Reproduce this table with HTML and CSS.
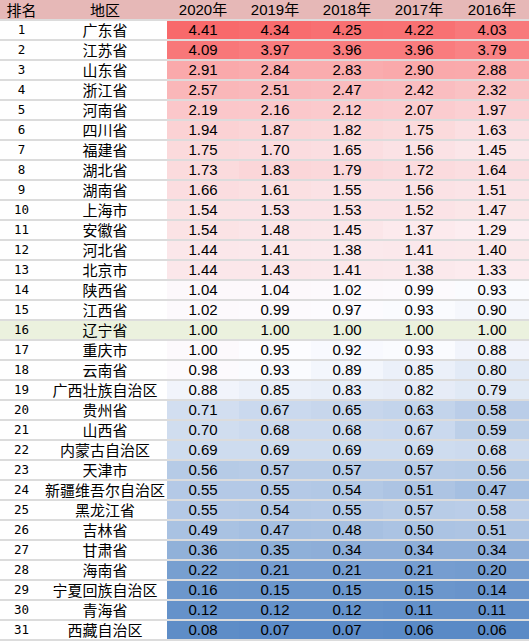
FILE: index.html
```html
<!DOCTYPE html>
<html lang="zh-CN">
<head>
<meta charset="utf-8">
<title>排名</title>
<link rel="stylesheet" href="styles.css">
</head>
<body>
<table class="rank-table">
  <colgroup>
    <col class="c-rank"><col class="c-region"><col class="c-year"><col class="c-year"><col class="c-year"><col class="c-year"><col class="c-last">
  </colgroup>
  <thead>
    <tr><th class="rank">排名</th><th class="region">地区</th><th>2020年</th><th>2019年</th><th>2018年</th><th>2017年</th><th>2016年</th></tr>
  </thead>
  <tbody>
    <tr><td class="rank">1</td><td class="region">广东省</td><td class="val">4.41</td><td class="val">4.34</td><td class="val">4.25</td><td class="val">4.22</td><td class="val">4.03</td></tr>
    <tr><td class="rank">2</td><td class="region">江苏省</td><td class="val">4.09</td><td class="val">3.97</td><td class="val">3.96</td><td class="val">3.96</td><td class="val">3.79</td></tr>
    <tr><td class="rank">3</td><td class="region">山东省</td><td class="val">2.91</td><td class="val">2.84</td><td class="val">2.83</td><td class="val">2.90</td><td class="val">2.88</td></tr>
    <tr><td class="rank">4</td><td class="region">浙江省</td><td class="val">2.57</td><td class="val">2.51</td><td class="val">2.47</td><td class="val">2.42</td><td class="val">2.32</td></tr>
    <tr><td class="rank">5</td><td class="region">河南省</td><td class="val">2.19</td><td class="val">2.16</td><td class="val">2.12</td><td class="val">2.07</td><td class="val">1.97</td></tr>
    <tr><td class="rank">6</td><td class="region">四川省</td><td class="val">1.94</td><td class="val">1.87</td><td class="val">1.82</td><td class="val">1.75</td><td class="val">1.63</td></tr>
    <tr><td class="rank">7</td><td class="region">福建省</td><td class="val">1.75</td><td class="val">1.70</td><td class="val">1.65</td><td class="val">1.56</td><td class="val">1.45</td></tr>
    <tr><td class="rank">8</td><td class="region">湖北省</td><td class="val">1.73</td><td class="val">1.83</td><td class="val">1.79</td><td class="val">1.72</td><td class="val">1.64</td></tr>
    <tr><td class="rank">9</td><td class="region">湖南省</td><td class="val">1.66</td><td class="val">1.61</td><td class="val">1.55</td><td class="val">1.56</td><td class="val">1.51</td></tr>
    <tr><td class="rank">10</td><td class="region">上海市</td><td class="val">1.54</td><td class="val">1.53</td><td class="val">1.53</td><td class="val">1.52</td><td class="val">1.47</td></tr>
    <tr><td class="rank">11</td><td class="region">安徽省</td><td class="val">1.54</td><td class="val">1.48</td><td class="val">1.45</td><td class="val">1.37</td><td class="val">1.29</td></tr>
    <tr><td class="rank">12</td><td class="region">河北省</td><td class="val">1.44</td><td class="val">1.41</td><td class="val">1.38</td><td class="val">1.41</td><td class="val">1.40</td></tr>
    <tr><td class="rank">13</td><td class="region">北京市</td><td class="val">1.44</td><td class="val">1.43</td><td class="val">1.41</td><td class="val">1.38</td><td class="val">1.33</td></tr>
    <tr><td class="rank">14</td><td class="region">陕西省</td><td class="val">1.04</td><td class="val">1.04</td><td class="val">1.02</td><td class="val">0.99</td><td class="val">0.93</td></tr>
    <tr><td class="rank">15</td><td class="region">江西省</td><td class="val">1.02</td><td class="val">0.99</td><td class="val">0.97</td><td class="val">0.93</td><td class="val">0.90</td></tr>
    <tr class="hl"><td class="rank">16</td><td class="region">辽宁省</td><td class="val">1.00</td><td class="val">1.00</td><td class="val">1.00</td><td class="val">1.00</td><td class="val">1.00</td></tr>
    <tr><td class="rank">17</td><td class="region">重庆市</td><td class="val">1.00</td><td class="val">0.95</td><td class="val">0.92</td><td class="val">0.93</td><td class="val">0.88</td></tr>
    <tr><td class="rank">18</td><td class="region">云南省</td><td class="val">0.98</td><td class="val">0.93</td><td class="val">0.89</td><td class="val">0.85</td><td class="val">0.80</td></tr>
    <tr><td class="rank">19</td><td class="region">广西壮族自治区</td><td class="val">0.88</td><td class="val">0.85</td><td class="val">0.83</td><td class="val">0.82</td><td class="val">0.79</td></tr>
    <tr><td class="rank">20</td><td class="region">贵州省</td><td class="val">0.71</td><td class="val">0.67</td><td class="val">0.65</td><td class="val">0.63</td><td class="val">0.58</td></tr>
    <tr><td class="rank">21</td><td class="region">山西省</td><td class="val">0.70</td><td class="val">0.68</td><td class="val">0.68</td><td class="val">0.67</td><td class="val">0.59</td></tr>
    <tr><td class="rank">22</td><td class="region">内蒙古自治区</td><td class="val">0.69</td><td class="val">0.69</td><td class="val">0.69</td><td class="val">0.69</td><td class="val">0.68</td></tr>
    <tr><td class="rank">23</td><td class="region">天津市</td><td class="val">0.56</td><td class="val">0.57</td><td class="val">0.57</td><td class="val">0.57</td><td class="val">0.56</td></tr>
    <tr><td class="rank">24</td><td class="region">新疆维吾尔自治区</td><td class="val">0.55</td><td class="val">0.55</td><td class="val">0.54</td><td class="val">0.51</td><td class="val">0.47</td></tr>
    <tr><td class="rank">25</td><td class="region">黑龙江省</td><td class="val">0.55</td><td class="val">0.54</td><td class="val">0.55</td><td class="val">0.57</td><td class="val">0.58</td></tr>
    <tr><td class="rank">26</td><td class="region">吉林省</td><td class="val">0.49</td><td class="val">0.47</td><td class="val">0.48</td><td class="val">0.50</td><td class="val">0.51</td></tr>
    <tr><td class="rank">27</td><td class="region">甘肃省</td><td class="val">0.36</td><td class="val">0.35</td><td class="val">0.34</td><td class="val">0.34</td><td class="val">0.34</td></tr>
    <tr><td class="rank">28</td><td class="region">海南省</td><td class="val">0.22</td><td class="val">0.21</td><td class="val">0.21</td><td class="val">0.21</td><td class="val">0.20</td></tr>
    <tr><td class="rank">29</td><td class="region">宁夏回族自治区</td><td class="val">0.16</td><td class="val">0.15</td><td class="val">0.15</td><td class="val">0.15</td><td class="val">0.14</td></tr>
    <tr><td class="rank">30</td><td class="region">青海省</td><td class="val">0.12</td><td class="val">0.12</td><td class="val">0.12</td><td class="val">0.11</td><td class="val">0.11</td></tr>
    <tr><td class="rank">31</td><td class="region">西藏自治区</td><td class="val">0.08</td><td class="val">0.07</td><td class="val">0.07</td><td class="val">0.06</td><td class="val">0.06</td></tr>
  </tbody>
</table>
<script src="script.js"></script>
</body>
</html>
```

FILE: styles.css
```css
html, body {
  margin: 0;
  padding: 0;
  background: #ffffff;
}

.rank-table {
  border-collapse: separate;
  border-spacing: 0;
  table-layout: fixed;
  width: 529px;
  font-family: "Liberation Sans", "Noto Sans CJK SC", sans-serif;
  font-size: 15px;
  color: #000;
}

.c-rank { width: 43px; }
.c-region { width: 124px; }
.c-year { width: 72px; }
.c-last { width: 74px; }

.rank-table th {
  height: 19px;
  padding: 0;
  background: #e6b8b7;
  font-weight: normal;
  text-align: center;
  line-height: 19px;
  font-family: "Liberation Sans", "Noto Sans CJK SC", sans-serif;
}

.rank-table th.rank,
.rank-table th.region {
  font-family: "Noto Sans CJK SC", sans-serif;
}

.rank-table td {
  height: 18px;
  padding: 0;
  border-top: 2px solid #dcdcdc;
  text-align: center;
  line-height: 18px;
  white-space: nowrap;
  overflow: hidden;
}

.rank-table tbody tr:last-child td {
  border-bottom: 2px solid #dcdcdc;
}

.rank-table td.rank {
  font-family: "DejaVu Sans Mono", monospace;
  font-size: 12.5px;
}

.rank-table td.region {
  font-family: "Noto Sans CJK SC", sans-serif;
  font-size: 15px;
}

.rank-table td.val {
  font-family: "Liberation Sans", Arial, sans-serif;
}

.rank-table tr.hl td {
  background: #ebf1de;
}
```

FILE: script.js
```js
(function () {
  var MIN = [90, 138, 198];   // #5A8AC6
  var MID = [252, 252, 255];  // #FCFCFF
  var MAX = [248, 105, 107];  // #F8696B
  var cells = Array.prototype.slice.call(document.querySelectorAll('tbody tr:not(.hl) td.val'));
  var vals = cells.map(function (c) { return parseFloat(c.textContent); });
  var sorted = vals.slice().sort(function (a, b) { return a - b; });
  var lo = sorted[0], hi = sorted[sorted.length - 1];
  var n = sorted.length;
  var pos = (n - 1) * 0.5, i = Math.floor(pos);
  var mid = sorted[i] + (sorted[Math.min(i + 1, n - 1)] - sorted[i]) * (pos - i);
  function mix(a, b, t) {
    return 'rgb(' + a.map(function (v, k) { return Math.round(v + (b[k] - v) * t); }).join(',') + ')';
  }
  cells.forEach(function (c, k) {
    var v = vals[k];
    var col = v >= mid ? mix(MID, MAX, (v - mid) / (hi - mid)) : mix(MID, MIN, (mid - v) / (mid - lo));
    c.style.backgroundColor = col;
  });
})();
```
